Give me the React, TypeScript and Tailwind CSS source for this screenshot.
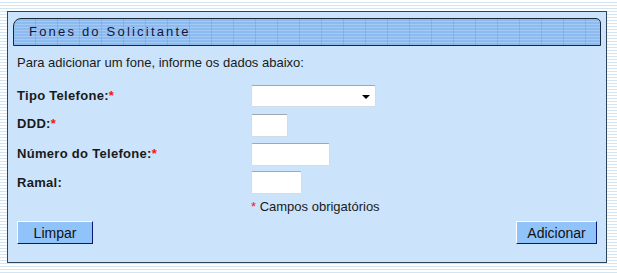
import React from 'react';

const Req: React.FC = () => <span className="text-[#ff1010]">*</span>;

const App: React.FC = () => {
  return (
    <div className="w-[617px] h-[273px] pt-[11px] pl-[7px] bg-[repeating-linear-gradient(to_bottom,#ffffff_0px,#ffffff_2px,#d3e4f3_2px,#d3e4f3_3px)] font-['Liberation_Sans',Arial,sans-serif]">
      <div className="w-[600px] h-[252px] border border-[#2f4459] bg-[#cbe4fc] flex flex-col">
        {/* Title bar */}
        <div className="mt-[6px] ml-[5px] w-[588px] h-[28px] flex items-center pl-[15px] border border-[#1b2838] rounded-tl-[8px] rounded-tr-[5px] bg-[repeating-linear-gradient(to_right,transparent_0px,transparent_21px,rgba(40,70,110,0.12)_21px,rgba(40,70,110,0.12)_22px),repeating-linear-gradient(to_bottom,#8dbbf0_0px,#8dbbf0_2px,#a2caf5_2px,#a2caf5_3px)]">
          <span className="text-[13px] tracking-[2.2px] text-[#15153a]">Fones do Solicitante</span>
        </div>

        <p className="mt-[10px] ml-[9px] text-[13px] leading-[14px] text-[#1a1a1a]">
          Para adicionar um fone, informe os dados abaixo:
        </p>

        {/* Form */}
        <div className="ml-[9px] flex flex-col text-[13px] font-bold tracking-[0.3px] text-[#1a1a1a]">
          <div className="mt-[14px] h-[23px] flex items-center">
            <label className="w-[234px]">Tipo Telefone:<Req /></label>
            <div className="relative w-[125px] h-[22px] bg-white border border-[#d4dbe2] border-t-[#9fa8b1] rounded-[2px]">
              <span className="absolute right-[5px] top-[9px] w-0 h-0 border-l-[4px] border-r-[4px] border-t-[4px] border-l-transparent border-r-transparent border-t-black" />
            </div>
          </div>
          <div className="mt-[7px] h-[23px] flex items-center">
            <label className="w-[234px] -mt-[4px]">DDD:<Req /></label>
            <div className="w-[37px] h-[23px] bg-white border border-[#d4dbe2] border-t-[#9fa8b1] rounded-[2px]" />
          </div>
          <div className="mt-[6px] h-[23px] flex items-center">
            <label className="w-[234px] -mt-[2px]">Número do Telefone:<Req /></label>
            <div className="w-[79px] h-[23px] bg-white border border-[#d4dbe2] border-t-[#9fa8b1] rounded-[2px]" />
          </div>
          <div className="mt-[5px] h-[23px] flex items-center">
            <label className="w-[234px]">Ramal:</label>
            <div className="w-[51px] h-[23px] bg-white border border-[#d4dbe2] border-t-[#9fa8b1] rounded-[2px]" />
          </div>
        </div>

        <p className="mt-[6px] ml-[243px] text-[13px] leading-[14px] text-[#1a1a1a]">
          <Req /> Campos obrigatórios
        </p>

        <div className="mt-[7px] px-[9px] flex justify-between">
          <button className="w-[76px] h-[23px] bg-[#8fc3fa] border border-white border-r-[#0c1870] border-b-[#0c1870] text-[14px] leading-[20px] text-[#111]">
            Limpar
          </button>
          <button className="w-[81px] h-[23px] bg-[#8fc3fa] border border-white border-r-[#0c1870] border-b-[#0c1870] text-[14px] leading-[20px] text-[#111]">
            Adicionar
          </button>
        </div>
      </div>
    </div>
  );
};

export default App;
